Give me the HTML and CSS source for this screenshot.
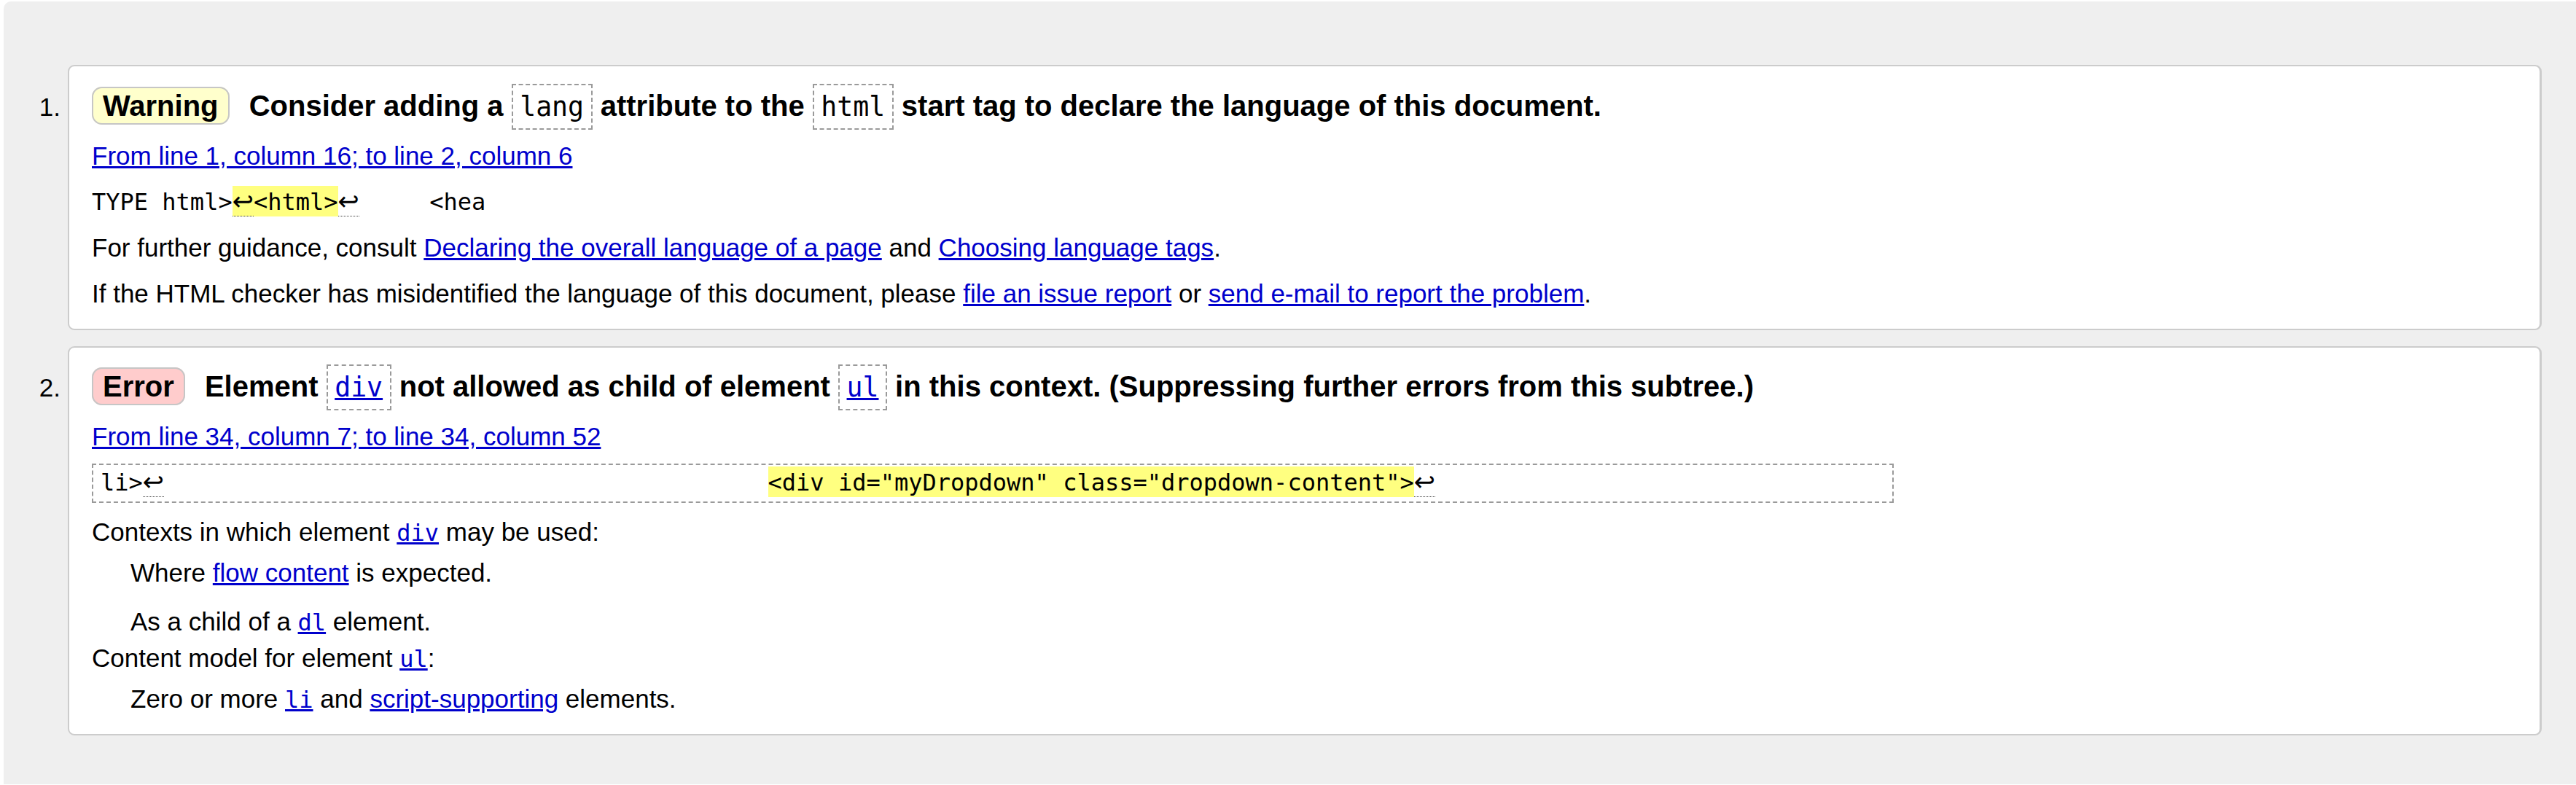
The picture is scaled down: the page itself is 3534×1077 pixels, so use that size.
FILE: index.html
```html
<!DOCTYPE html>
<html lang="en">
<head>
<meta charset="utf-8">
<title>Nu Html Checker results</title>
<link rel="stylesheet" href="styles.css">
</head>
<body>
<div class="results">
  <ol class="messages">
    <li class="item">
      <span class="num">1.</span>
      <div class="card">
        <p class="title"><strong class="badge warning">Warning</strong> <span>Consider adding a <code class="tag">lang</code> attribute to the <code class="tag">html</code> start tag to declare the language of this document.</span></p>
        <p class="loc"><a href="#">From line 1, column 16; to line 2, column 6</a></p>
        <p class="extract">TYPE html&gt;<b class="hl"><span class="lf">↩</span>&lt;html&gt;</b><span class="lf">↩</span>     &lt;hea</p>
        <p class="text">For further guidance, consult <a href="#">Declaring the overall language of a page</a> and <a href="#">Choosing language tags</a>.</p>
        <p class="text">If the HTML checker has misidentified the language of this document, please <a href="#">file an issue report</a> or <a href="#">send e-mail to report the problem</a>.</p>
      </div>
    </li>
    <li class="item">
      <span class="num">2.</span>
      <div class="card">
        <p class="title"><strong class="badge error">Error</strong> <span>Element <code class="tag"><a href="#">div</a></code> not allowed as child of element <code class="tag"><a href="#">ul</a></code> in this context. (Suppressing further errors from this subtree.)</span></p>
        <p class="loc"><a href="#">From line 34, column 7; to line 34, column 52</a></p>
        <p class="extract boxed">li&gt;<span class="lf">↩</span>                                           <b class="hl">&lt;div id="myDropdown" class="dropdown-content"&gt;</b><span class="lf">↩</span>                                </p>
        <dl class="details">
          <dt>Contexts in which element <a href="#"><code>div</code></a> may be used:</dt>
          <dd>Where <a href="#">flow content</a> is expected.</dd>
          <dd>As a child of a <a href="#"><code>dl</code></a> element.</dd>
          <dt>Content model for element <a href="#"><code>ul</code></a>:</dt>
          <dd>Zero or more <a href="#"><code>li</code></a> and <a href="#">script-supporting</a> elements.</dd>
        </dl>
      </div>
    </li>
  </ol>
</div>
</body>
</html>
```

FILE: styles.css
```css
html, body {
  margin: 0;
  padding: 0;
  background: #ffffff;
}

body {
  font-family: "Liberation Sans", Arial, sans-serif;
  font-size: 35px;
  line-height: 49px;
  color: #000;
}

a {
  color: #0000cc;
  text-decoration: underline;
}

.results {
  margin: 2px 0 0 5px;
  padding: 87px 47px 67px 0;
  background: #efefef;
  border-top-left-radius: 10px;
}

.messages {
  list-style: none;
  margin: 0;
  padding: 0;
}

.item {
  display: flex;
  align-items: baseline;
}

.item + .item {
  margin-top: 22px;
}

.num {
  flex: 0 0 88px;
  box-sizing: border-box;
  padding-right: 10px;
  text-align: right;
  font-size: 35px;
  line-height: 49px;
}

.card {
  flex: 1 1 auto;
  min-width: 0;
  background: #fff;
  border: 2px solid #cccccc;
  border-right-width: 3px;
  border-bottom-width: 2px;
  border-radius: 9px;
  padding: 25.5px 30px 24px 31px;
}

.card p {
  margin: 0;
}

.title {
  font-size: 40px;
  line-height: 56px;
  font-weight: bold;
  white-space: nowrap;
}

.badge {
  display: inline;
  font-weight: bold;
  padding: 2px 13px;
  margin-right: 16px;
  border: 2px solid #c6c6c6;
  border-radius: 14px;
}

.badge.warning {
  background: #ffffcc;
}

.badge.error {
  background: #ffcccc;
}

code {
  font-family: "DejaVu Sans Mono", "Liberation Mono", monospace;
  font-size: 32px;
  line-height: 1;
}

.tag {
  font-size: 36.5px;
  font-weight: normal;
  line-height: 1;
  padding: 8px 9.5px;
  border: 2px dashed #9a9a9a;
}

.loc {
  margin-top: 16px !important;
}

.extract {
  margin-top: 15px !important;
  font-family: "DejaVu Sans Mono", "Liberation Mono", monospace;
  font-size: 32px;
  line-height: 49px;
  white-space: pre;
}

.extract.boxed {
  margin-top: 12.5px !important;
  width: fit-content;
  line-height: 48px;
  padding: 0 10px 2px 10px;
  border: 2px dashed #9a9a9a;
}

.hl {
  font-weight: normal;
  background: #ffff80;
  padding: 3px 0 1px 0;
}

.lf {
  font-family: "DejaVu Sans", sans-serif;
  font-size: 35px;
  line-height: 0;
  border-bottom: 1px dotted #444;
}

.text {
  margin-top: 13.5px !important;
}

.details {
  margin: 15px 0 0 0;
}

.details dt {
  margin: 0;
}

.details dd {
  margin: 7px 0 0 53px;
}

.details dd + dd {
  margin-top: 18px;
}

.details dd + dt {
  margin-top: 1px;
}
```
